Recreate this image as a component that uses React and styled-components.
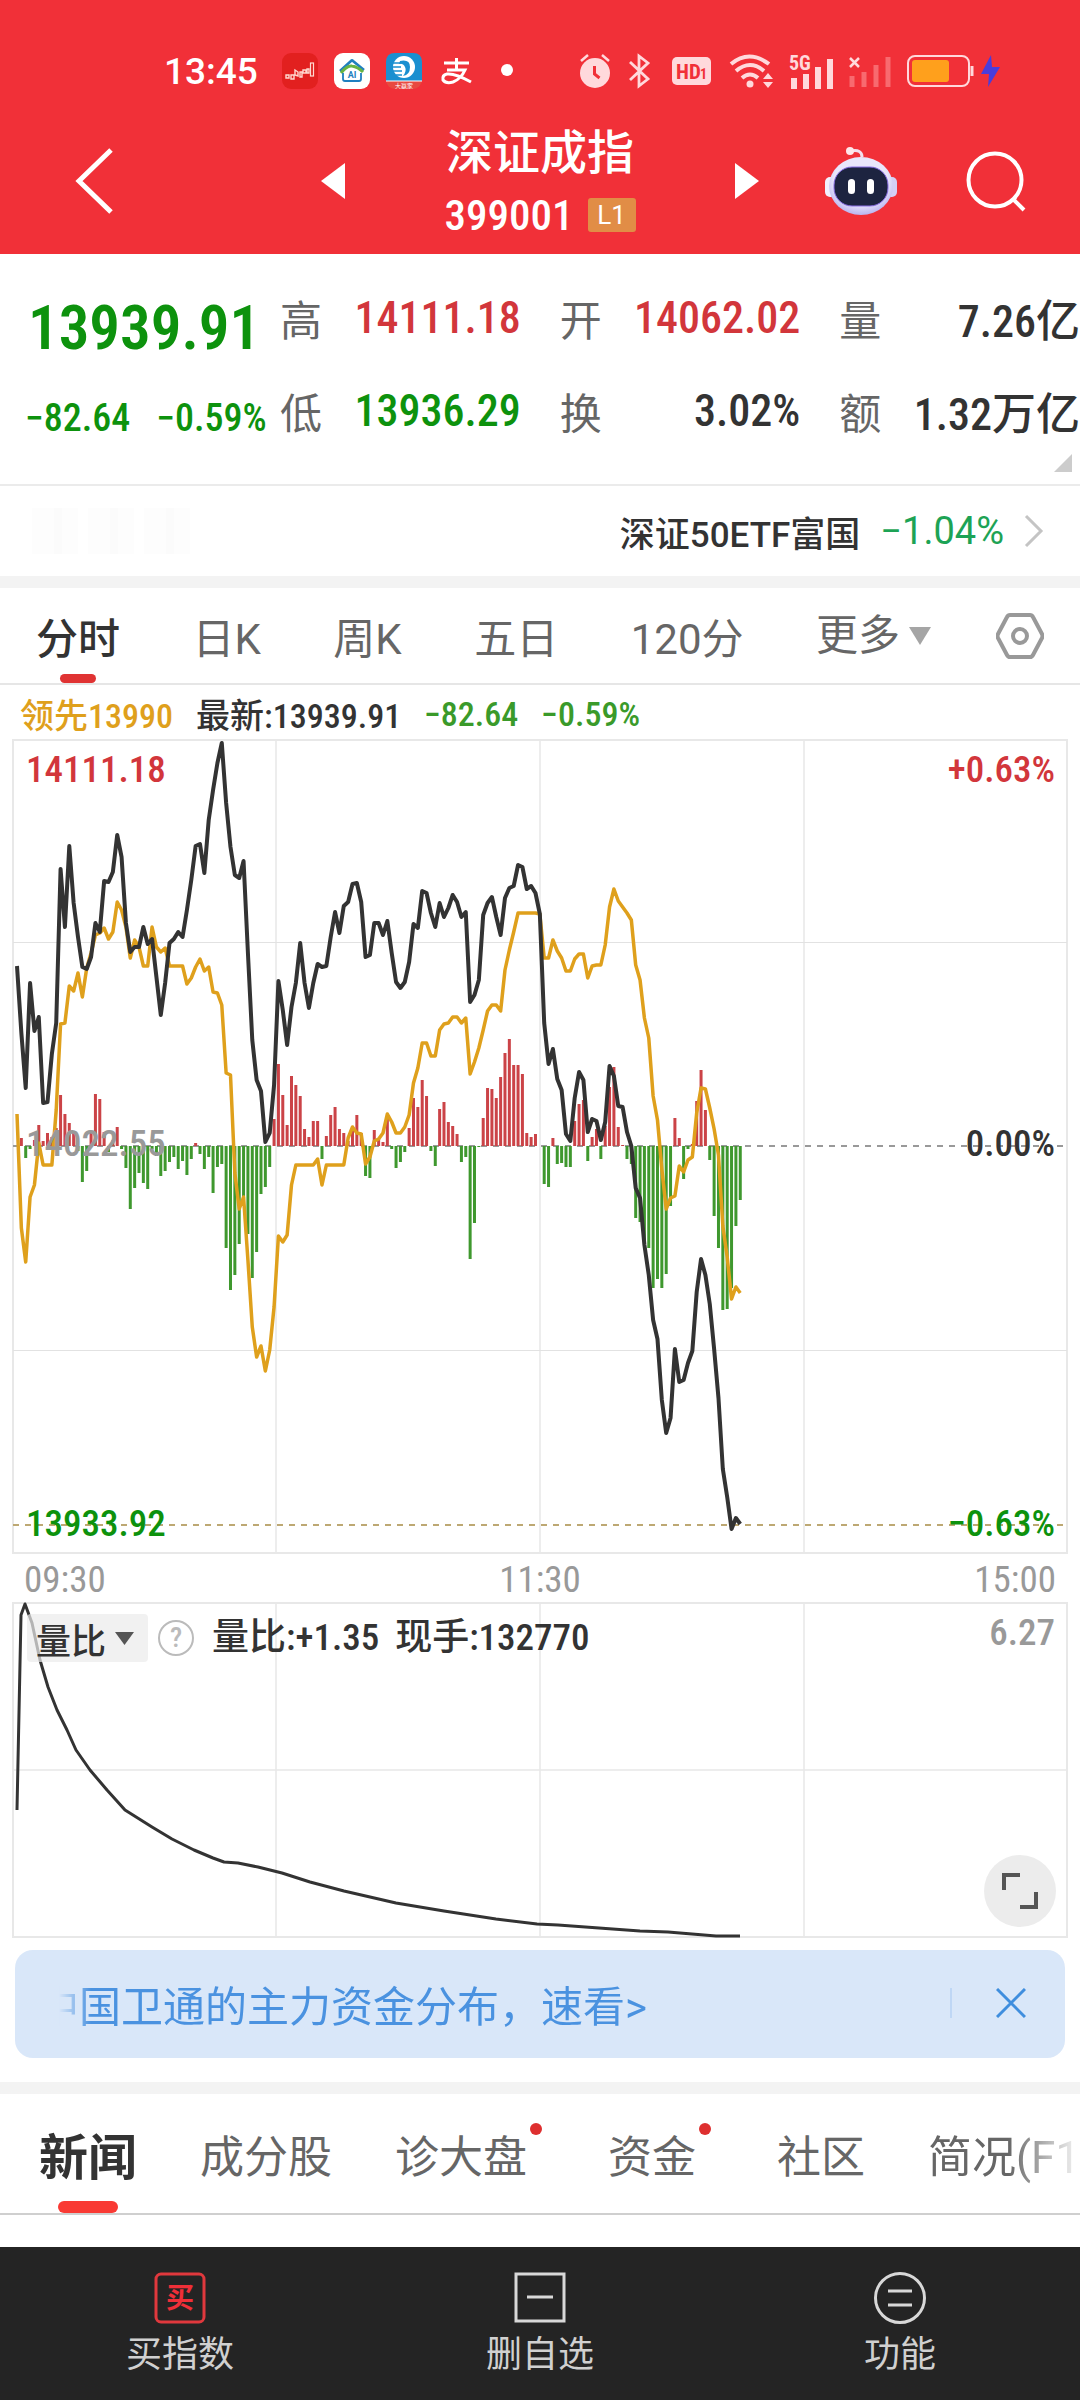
import { useState } from "react";
import styled, { createGlobalStyle } from "styled-components";

const GlobalStyle = createGlobalStyle`
  * {
    box-sizing: border-box;
  }
  body {
    margin: 0;
    background-color: white;
    color: #333;
    font-family: Roboto, "Noto Sans CJK SC", sans-serif;
  }
  button, select {
    margin: 0;
    padding: 0;
    border: none;
    background: none;
    color: inherit;
    font: inherit;
    cursor: pointer;
  }
  svg {
    display: block;
    flex-shrink: 0;
  }
`;

const RED = "#d2363b";
const GREEN = "#0d920d";
const numberFont = `"Roboto Condensed", "Liberation Sans Narrow", Roboto, "Noto Sans CJK SC", sans-serif`;

const Page = styled.div`
  width: 100%;
  min-height: 100vh;
  display: flex;
  flex-direction: column;
  overflow: hidden;
`;

const Header = styled.header`
  background-color: #f13038;
  color: white;
`;

const StatusBar = styled.div`
  display: flex;
  justify-content: space-between;
  align-items: center;
  height: 112px;
  padding: 30px 79px 0 164px;
`;

const StatusGroup = styled.div`
  display: flex;
  align-items: center;
  gap: 16px;
`;

const Clock = styled.span`
  font-size: 37px;
  font-weight: 500;
  margin-right: 8px;
`;

const TitleBar = styled.div`
  display: grid;
  grid-template-columns: 1fr 438px 1fr;
  align-items: center;
  height: 142px;
  padding: 0 54px 4px;
`;

const TitleNav = styled.div`
  display: flex;
  justify-content: space-between;
  align-items: center;
`;

const HeaderActions = styled.div`
  display: flex;
  justify-content: flex-end;
  align-items: center;
  gap: 68px;
`;

const IconButton = styled.button`
  display: flex;
  align-items: center;
`;

const BackButton = styled(IconButton)`
  padding-left: 21px;
`;

const TitleBlock = styled.div`
  display: flex;
  flex-direction: column;
  align-items: center;
  gap: 8px;
  h1 {
    margin: 0;
    font-size: 47px;
    line-height: 60px;
    font-weight: 500;
  }
`;

const CodeLine = styled.div`
  display: flex;
  align-items: center;
  gap: 14px;
  font-family: ${numberFont};
  font-size: 43px;
  line-height: 48px;
  font-weight: 500;
`;

const LevelBadge = styled.span`
  width: 48px;
  height: 34px;
  border-radius: 3px;
  background-color: #e18d46;
  font-family: Roboto, sans-serif;
  font-size: 26px;
  line-height: 34px;
  font-weight: 400;
  text-align: center;
`;

const Quote = styled.section`
  position: relative;
  display: flex;
  height: 232px;
  padding-top: 17px;
  border-bottom: 2px solid #ebebeb;
`;

const Price = styled.div`
  width: 280px;
  flex-shrink: 0;
  color: ${GREEN};
  font-family: ${numberFont};
`;

const LastPrice = styled.div`
  padding-left: 28px;
  font-size: 61px;
  font-weight: 600;
  line-height: 114px;
`;

const Change = styled.div`
  display: flex;
  gap: 26px;
  padding-left: 25px;
  font-size: 38px;
  font-weight: 500;
  line-height: 66px;
  white-space: nowrap;
`;

const QuoteGrid = styled.dl`
  flex: 1;
  display: grid;
  grid-template-columns: repeat(3, 1fr);
  grid-auto-rows: 93px;
  column-gap: 39px;
  margin: 0;
`;

const QuoteItem = styled.div`
  display: flex;
  justify-content: space-between;
  align-items: center;
  dt {
    color: #666;
    font-size: 42px;
  }
  dd {
    margin: 0;
    color: ${(props) => props.$color || "#333"};
    font-family: ${numberFont};
    font-size: 44px;
    font-weight: 500;
    white-space: nowrap;
  }
`;

const Corner = styled.svg`
  position: absolute;
  right: 8px;
  bottom: 12px;
`;

const EtfLink = styled.a`
  display: flex;
  align-items: center;
  height: 90px;
  padding: 0 36px 0 32px;
  color: #333;
  text-decoration: none;
  font-size: 35px;
  font-weight: 500;
`;

const Ghost = styled.span`
  width: 168px;
  height: 46px;
  margin-right: auto;
  background: repeating-linear-gradient(
    90deg,
    #fdfdfd 0 22px,
    #fbfbfb 22px 30px,
    #fdfdfd 30px 46px,
    #fff 46px 56px
  );
`;

const EtfChange = styled.span`
  margin: 0 20px;
  color: #1da355;
  font-size: 38px;
  font-weight: 400;
`;

const Band = styled.div`
  height: 12px;
  background-color: #f3f3f3;
`;

const PeriodBar = styled.div`
  display: flex;
  gap: 65px;
  height: 97px;
  padding: 0 36px;
  border-bottom: 2px solid #e6e6e6;
`;

const PeriodTabs = styled.nav`
  flex: 1;
  display: flex;
  justify-content: space-between;
`;

const PeriodTab = styled.button`
  position: relative;
  color: ${(props) => (props.$active ? "#333" : "#666")};
  font-size: 42px;
  font-weight: ${(props) => (props.$active ? 500 : 400)};
  &::after {
    content: "";
    display: ${(props) => (props.$active ? "block" : "none")};
    position: absolute;
    left: 50%;
    bottom: 0;
    width: 36px;
    height: 9px;
    margin-left: -18px;
    border-radius: 5px;
    background-color: #e03333;
  }
`;

const SelectWrap = styled.label`
  display: flex;
  align-items: center;
  gap: 8px;
  color: #666;
  font-size: 42px;
  select {
    appearance: none;
    outline: none;
  }
`;

const Legend = styled.div`
  display: flex;
  align-items: center;
  gap: 23px;
  height: 55px;
  padding: 2px 20px 0;
  font-family: ${numberFont};
  font-size: 34px;
  font-weight: 500;
  white-space: nowrap;
`;

const Tone = styled.span`
  color: ${(props) => props.$color};
`;

const Plot = styled.div`
  position: relative;
  margin: 0 13px;
  height: ${(props) => props.$height}px;
  > svg {
    width: 100%;
    height: 100%;
    overflow: visible;
  }
`;

const PlotLabels = styled.div`
  position: absolute;
  left: 13px;
  right: 12px;
  top: ${(props) => props.$top};
  display: flex;
  justify-content: space-between;
  color: ${(props) => props.$color};
  font-family: ${numberFont};
  font-size: 37px;
  line-height: 40px;
  font-weight: 500;
`;

const TimeAxis = styled.div`
  display: flex;
  justify-content: space-between;
  align-items: center;
  height: 50px;
  padding: 2px 24px 0;
  color: #999;
  font-family: ${numberFont};
  font-size: 37px;
`;

const RatioBar = styled.div`
  position: absolute;
  top: 11px;
  left: 14px;
  right: 12px;
  display: flex;
  align-items: center;
  height: 48px;
  font-family: ${numberFont};
  font-size: 37px;
  font-weight: 500;
  white-space: nowrap;
`;

const RatioSelect = styled.label`
  display: flex;
  align-items: center;
  gap: 8px;
  height: 48px;
  padding: 0 14px 0 9px;
  border-radius: 4px;
  background-color: rgba(235, 235, 235, 0.7);
  font-family: "Noto Sans CJK SC", sans-serif;
  font-size: 35px;
  select {
    appearance: none;
    outline: none;
  }
`;

const HelpButton = styled.button`
  width: 36px;
  height: 36px;
  margin: 0 18px 0 10px;
  border: 2px solid #bbb;
  border-radius: 50%;
  color: #bbb;
  font-size: 28px;
  line-height: 32px;
`;

const RatioValue = styled.span`
  margin-right: 16px;
  line-height: 48px;
`;

const RatioMax = styled.span`
  margin-left: auto;
  padding-bottom: 12px;
  color: #999;
`;

const ExpandButton = styled.button`
  position: absolute;
  right: 11px;
  bottom: 10px;
  width: 72px;
  height: 72px;
  display: flex;
  align-items: center;
  justify-content: center;
  border-radius: 50%;
  background-color: #ececec;
`;

const Banner = styled.aside`
  display: flex;
  align-items: center;
  height: 108px;
  margin: 13px 15px 24px;
  padding: 0 39px 2px 44px;
  border-radius: 18px;
  background-color: #d9e7f9;
  color: #4a92e0;
`;

const BannerText = styled.a`
  flex: 1;
  overflow: hidden;
  color: inherit;
  font-size: 42px;
  text-decoration: none;
  text-indent: -22px;
  white-space: nowrap;
  mask-image: linear-gradient(90deg, transparent, black 32px);
`;

const Divider = styled.span`
  width: 2px;
  height: 30px;
  margin-right: 44px;
  background-color: #bfd7f5;
`;

const InfoTabs = styled.nav`
  display: flex;
  gap: 63px;
  height: 121px;
  padding-left: 39px;
  border-bottom: 2px solid #cfcfcf;
  white-space: nowrap;
  overflow: hidden;
`;

const InfoTab = styled.button`
  position: relative;
  display: flex;
  align-items: center;
  flex-shrink: 0;
  color: ${(props) => (props.$active ? "#333" : "#666")};
  font-size: ${(props) => (props.$active ? 49 : 44)}px;
  font-weight: ${(props) => (props.$active ? 600 : 400)};
  mask-image: ${(props) =>
    props.$fade ? "linear-gradient(90deg, black 80px, transparent 155px)" : "none"};
  &::after {
    content: "";
    display: ${(props) => (props.$active ? "block" : "none")};
    position: absolute;
    left: 50%;
    bottom: 0;
    width: 60px;
    height: 12px;
    margin-left: -30px;
    border-radius: 6px;
    background-color: #f93a34;
  }
`;

const Dot = styled.span`
  align-self: flex-start;
  width: 12px;
  height: 12px;
  margin: 29px 3px 0;
  border-radius: 50%;
  background-color: #de2f2f;
`;

const BottomBar = styled.footer`
  display: flex;
  height: 153px;
  margin-top: auto;
  background-color: #242424;
  color: #d0d0d0;
`;

const BottomButton = styled.button`
  flex: 1;
  display: flex;
  flex-direction: column;
  align-items: center;
  gap: 6px;
  padding-top: 24px;
  font-size: 36px;
  line-height: 48px;
`;

// one value per minute, measured from the top of the plot
const price = [
  226, 293, 348, 243, 291, 277, 363, 362, 314, 283, 129, 187, 106, 163, 197,
  227, 229, 217, 183, 192, 141, 142, 132, 95, 117, 183, 212, 207, 207, 187,
  204, 199, 237, 275, 243, 203, 199, 192, 197, 170, 140, 106, 104, 133, 80,
  50, 23, 3, 63, 107, 135, 138, 121, 213, 300, 340, 351, 402, 393, 345, 241,
  270, 305, 267, 243, 203, 243, 268, 243, 224, 227, 226, 197, 172, 193, 166,
  162, 144, 143, 162, 217, 215, 183, 183, 195, 181, 213, 242, 248, 242, 222,
  184, 188, 151, 153, 173, 187, 163, 177, 168, 155, 162, 177, 172, 262, 255,
  240, 175, 163, 157, 177, 195, 158, 148, 146, 125, 127, 149, 146, 153, 174,
  283, 324, 309, 339, 350, 394, 401, 358, 332, 340, 392, 379, 381, 400, 382,
  326, 336, 366, 367, 392, 406, 448, 458, 505, 535, 580, 599, 660, 693, 678,
  609, 642, 640, 623, 611, 552, 519, 535, 564, 609, 658, 729, 757, 789, 778,
  784,
];

const lead = [
  374, 488, 522, 457, 445, 403, 425, 425, 425, 370, 284, 283, 246, 251, 233,
  257, 228, 213, 195, 193, 188, 199, 192, 162, 170, 187, 218, 200, 207, 226,
  226, 187, 207, 212, 208, 226, 226, 226, 226, 244, 238, 227, 219, 231, 227,
  252, 253, 265, 333, 335, 433, 469, 457, 520, 587, 617, 606, 631, 610, 567,
  496, 502, 495, 445, 425, 425, 425, 425, 425, 419, 445, 425, 425, 425, 425,
  425, 398, 387, 393, 394, 424, 417, 401, 399, 393, 374, 382, 393, 393, 387,
  375, 343, 328, 303, 303, 316, 316, 290, 284, 283, 277, 277, 283, 278, 334,
  322, 308, 290, 271, 265, 265, 271, 230, 210, 192, 173, 173, 173, 173, 173,
  174, 218, 218, 200, 211, 218, 231, 231, 219, 214, 214, 238, 226, 225, 225,
  205, 167, 149, 161, 167, 173, 180, 225, 240, 278, 298, 356, 380, 429, 469,
  458, 456, 426, 432, 420, 417, 373, 348, 349, 368, 389, 415, 486, 517, 559,
  547, 553,
];

const bars = [
  0, 8, -12, -3, 6, 21, 5, 13, 9, 18, 51, 32, 23, 14, -5, -36, -25, 14, 52,
  47, 14, -6, 6, 19, -3, -22, -63, -42, -27, -37, -43, -3, -10, -30, -25, -16,
  -11, -23, -15, -29, -13, 3, -8, -23, -11, -47, -21, -18, -102, -144, -129,
  -98, -50, -88, -132, -106, -48, -41, -21, 27, 82, 51, 21, 70, 61, 50, 17, 9,
  25, 25, -13, 10, 31, 39, 17, 13, 5, 16, 31, 13, -30, -32, 16, 8, 4, 28, -3,
  -22, -16, -6, 18, 48, 39, 66, 50, -5, -20, 37, 44, 24, 20, 12, -16, -11,
  -113, -77, -1, 28, 58, 57, 48, 69, 93, 107, 81, 81, 72, 13, 9, 12, 0, -38,
  -41, 8, -18, -17, -21, -21, 25, 42, 46, -15, 9, 17, -13, 20, 59, 79, 19, 1,
  -13, -18, -72, -76, -95, -102, -142, -133, -142, -128, -60, 28, 8, -33, -3,
  2, 45, 76, 36, -14, -70, -102, -164, -163, -142, -80, -54,
];

const ratio =
  "4,207 8,12 12,1 19,20 27,57 35,84 44,107 54,127 63,147 77,167 94,187 112,207 139,224 159,236 181,247 200,255 211,259 225,260 245,264 269,270 297,279 331,288 383,300 431,308 483,316 524,321 545,322 586,325 627,328 655,329 703,333 727,333";

const ZERO = 406;
const xOf = (i) => 4 + i * 4.357;
const toPoints = (values) => values.map((y, i) => `${xOf(i)},${y}`).join(" ");

const quotes = [
  ["高", "14111.18", RED],
  ["开", "14062.02", RED],
  ["量", "7.26亿"],
  ["低", "13936.29", GREEN],
  ["换", "3.02%"],
  ["额", "1.32万亿"],
];

const periods = ["分时", "日K", "周K", "五日", "120分"];

const infoTabs = [
  { name: "新闻" },
  { name: "成分股" },
  { name: "诊大盘", dot: true },
  { name: "资金", dot: true },
  { name: "社区" },
  { name: "简况(F10)", fade: true },
];

const Triangle = ({ width, height, color, dir }) => {
  const points = {
    left: `${width},0 ${width},${height} 0,${height / 2}`,
    right: `0,0 0,${height} ${width},${height / 2}`,
    down: `0,0 ${width},0 ${width / 2},${height}`,
  };
  return (
    <svg width={width} height={height} aria-hidden="true">
      <polygon points={points[dir]} fill={color} />
    </svg>
  );
};

const StatusIcons = () => (
  <>
    <StatusGroup>
      <Clock>13:45</Clock>
      <svg width="36" height="36" viewBox="0 0 36 36">
        <rect width="36" height="36" rx="9" fill="#e2201f" />
        <path d="M4 25v-3h3v3zM9 26v-4h3v4zM13 22v-5l3 2v4zM18 24v-5h2v5zM21 20v-3h3v3zM25 20v-4h2v4z" fill="none" stroke="#ffd9d0" strokeWidth="1.4" />
        <rect x="28.500" y="10" width="3" height="13" fill="none" stroke="#ffd9d0" strokeWidth="1.2" />
      </svg>
      <svg width="36" height="36" viewBox="0 0 36 36">
        <rect width="36" height="36" rx="9" fill="white" />
        <path d="M6 18 17 8q1-1 2 0l11 9" fill="none" stroke="#1f7fc0" strokeWidth="2.600" />
        <path d="M7 20q6-8 11-7 6 1 11 6" fill="none" stroke="#67b445" strokeWidth="3" />
        <path d="M9 20v6q0 2 2 2h14q2 0 2-2v-6" fill="none" stroke="#1f7fc0" strokeWidth="1.800" />
        <text x="18" y="25" fontSize="9" fontWeight="700" textAnchor="middle" fill="#1f7fc0">AI</text>
      </svg>
      <svg width="36" height="36" viewBox="0 0 36 36">
        <rect width="36" height="36" rx="9" fill="#e8493f" />
        <path d="M0 28V9q0-9 9-9h18q9 0 9 9v19z" fill="#1a8fd0" />
        <circle cx="18" cy="14" r="11" fill="white" />
        <path d="M14 8q10-2 10 6t-7 9q4-5 2-9t-6-3z" fill="#1a8fd0" />
        <path d="M7 10h8M6 14h9M7 18h9M10 22h6" stroke="#1a8fd0" strokeWidth="1.300" />
        <path d="M0 28h36" stroke="white" />
        <text x="18" y="34.500" fontSize="6" textAnchor="middle" fill="white">大赢家</text>
      </svg>
      <svg width="36" height="36" viewBox="0 0 36 36">
        <path d="M6 10h25M18.500 5v12M9 17h18q-4 9-12 12-7 2-10-2-1-5 4-6 8-1 24 8" fill="none" stroke="white" strokeWidth="3" />
      </svg>
      <svg width="36" height="36" viewBox="0 0 36 36">
        <circle cx="17" cy="17" r="6" fill="white" />
      </svg>
    </StatusGroup>
    <StatusGroup>
      <svg width="32" height="36" viewBox="0 0 32 36">
        <circle cx="16" cy="20" r="15" fill="#ffd9dc" />
        <path d="m2 8 7-6M30 8l-7-6" stroke="#ffd9dc" strokeWidth="2.500" />
        <path d="M15.500 13v8l5 4" fill="none" stroke="#f13038" strokeWidth="3" />
      </svg>
      <svg width="26" height="36" viewBox="0 0 26 36">
        <path d="m3 9 18 17-9 7V3l9 7L3 27" fill="none" stroke="#ffd9dc" strokeWidth="2.800" />
      </svg>
      <svg width="44" height="30" viewBox="0 0 44 30">
        <rect x="3" y="1" width="39" height="28" rx="5" fill="#ffd9dc" />
        <text x="7" y="23" fontSize="21" fontWeight="700" fill="#f13038" fontFamily={numberFont}>HD</text>
        <text x="31" y="23" fontSize="14" fontWeight="700" fill="#f13038" fontFamily={numberFont}>1</text>
      </svg>
      <svg width="44" height="36" viewBox="0 0 44 36">
        <path d="M2 11q18-15 38 0M7 18q14-12 28 0M13 25q8-7 16 0" fill="none" stroke="#ffd9dc" strokeWidth="4" />
        <circle cx="21" cy="31" r="3.500" fill="#ffd9dc" />
        <path d="m34 26 5-6 5 6zM34 29l5 6 5-6z" fill="#ffd9dc" />
      </svg>
      <svg width="44" height="44" viewBox="0 -6 44 44">
        <text x="0" y="15" fontSize="20" fontWeight="700" fill="#ffd9dc" fontFamily={numberFont}>5G</text>
        <path d="M5 34V23M17 34V19M29 34V12M41 34V4" stroke="#ffd9dc" strokeWidth="6" />
      </svg>
      <svg width="42" height="36" viewBox="0 0 42 36">
        <path d="m1 5 9 9M10 5l-9 9" stroke="#ffd9dc" strokeWidth="2.500" />
        <path d="M3 34V23M15 34V19M27 34V12M39 34V4" stroke="#f86a6f" strokeWidth="5" />
      </svg>
      <svg width="94" height="36" viewBox="0 0 94 36">
        <rect x="1" y="3" width="61" height="30" rx="7" fill="none" stroke="#ffd9dc" strokeWidth="2" />
        <path d="M65 13v10" stroke="#ffd9dc" strokeWidth="3" />
        <rect x="5" y="7" width="37" height="22" rx="3" fill="#ffa01c" />
        <path d="M84 2 74 21h8l-1 13 12-20h-8z" fill="#4a3ddb" />
      </svg>
    </StatusGroup>
  </>
);

const Robot = () => (
  <svg width="74" height="74" viewBox="0 0 74 74">
    <defs>
      <radialGradient id="shell" cx="50%" cy="40%" r="60%">
        <stop offset="0.700" stopColor="#e9e6fb" />
        <stop offset="1" stopColor="#b9b4f0" />
      </radialGradient>
    </defs>
    <path d="M27 7q11-2 11 6" fill="none" stroke="#f3dfee" strokeWidth="3" />
    <circle cx="26" cy="7" r="4" fill="#ffe6ea" />
    <rect x="1" y="33" width="11" height="20" rx="5" fill="#f2effc" />
    <rect x="62" y="33" width="11" height="20" rx="5" fill="#d4cff6" />
    <ellipse cx="37" cy="42" rx="32" ry="29" fill="url(#shell)" />
    <rect x="10" y="23" width="54" height="39" rx="18" fill="#1d2440" stroke="#8a6fe6" />
    <rect x="24" y="35" width="7" height="15" rx="3.500" fill="white" />
    <rect x="43" y="35" width="7" height="15" rx="3.500" fill="white" />
  </svg>
);

const PriceChart = () => (
  <svg viewBox="0 0 1054 813" preserveAspectRatio="none" role="img" aria-label="分时走势">
    <g stroke="#e8e8e8" strokeWidth="2" fill="none">
      <rect x="0" y="0" width="1054" height="813" />
      <path d="M263 0V813M527 0V813M791 0V813" strokeWidth="1.500" />
      <path d="M0 202.500H1054M0 610.500H1054" stroke="#e2e2e2" strokeWidth="1" />
    </g>
    <path d={`M0 ${ZERO}H1054`} stroke="#999" strokeWidth="2" strokeDasharray="6 6" />
    <path d="M0 785H1054" stroke="#bda873" strokeWidth="2" strokeDasharray="6 6" />
    {bars.map((value, i) => (
      <rect
        key={i}
        x={xOf(i) - 1.5}
        y={value > 0 ? ZERO - value : ZERO}
        width="3"
        height={Math.abs(value)}
        fill={value > 0 ? "#cb4347" : "#3f982e"}
      />
    ))}
    <polyline points={toPoints(lead)} fill="none" stroke="#dfa01c" strokeWidth="3.500" strokeLinejoin="round" />
    <polyline points={toPoints(price)} fill="none" stroke="#333" strokeWidth="4" strokeLinejoin="round" />
  </svg>
);

const RatioChart = () => (
  <svg viewBox="0 0 1054 334" preserveAspectRatio="none" role="img" aria-label="量比">
    <g stroke="#e8e8e8" strokeWidth="2" fill="none">
      <rect x="0" y="0" width="1054" height="334" />
      <path d="M263 0V334M527 0V334M791 0V334M0 167H1054" strokeWidth="1.500" />
    </g>
    <polyline points={ratio} fill="none" stroke="#333" strokeWidth="3" strokeLinejoin="round" />
  </svg>
);

const App = () => {
  const [period, setPeriod] = useState("分时");
  const [tab, setTab] = useState("新闻");

  return (
    <Page>
      <GlobalStyle />
      <Header>
        <StatusBar>
          <StatusIcons />
        </StatusBar>
        <TitleBar>
          <BackButton aria-label="返回">
            <svg width="40" height="68" viewBox="0 0 40 68">
              <path d="M36 3 4 34l32 31" fill="none" stroke="white" strokeWidth="5" />
            </svg>
          </BackButton>
          <TitleNav>
            <IconButton aria-label="上一个">
              <Triangle width={24} height={36} color="white" dir="left" />
            </IconButton>
            <TitleBlock>
              <h1>深证成指</h1>
              <CodeLine>
                399001 <LevelBadge>L1</LevelBadge>
              </CodeLine>
            </TitleBlock>
            <IconButton aria-label="下一个">
              <Triangle width={24} height={36} color="white" dir="right" />
            </IconButton>
          </TitleNav>
          <HeaderActions>
            <IconButton aria-label="助手">
              <Robot />
            </IconButton>
            <IconButton aria-label="搜索">
              <svg width="60" height="62" viewBox="0 0 60 62">
                <circle cx="29" cy="30" r="26.500" fill="none" stroke="white" strokeWidth="4" />
                <path d="m47 49 11 11" stroke="white" strokeWidth="4" />
              </svg>
            </IconButton>
          </HeaderActions>
        </TitleBar>
      </Header>

      <Quote>
        <Price>
          <LastPrice>13939.91</LastPrice>
          <Change>
            <span>−82.64</span>
            <span>−0.59%</span>
          </Change>
        </Price>
        <QuoteGrid>
          {quotes.map(([label, value, color]) => (
            <QuoteItem key={label} $color={color}>
              <dt>{label}</dt>
              <dd>{value}</dd>
            </QuoteItem>
          ))}
        </QuoteGrid>
        <Corner width="18" height="18">
          <polygon points="18,0 18,18 0,18" fill="#ccc" />
        </Corner>
      </Quote>

      <EtfLink href="#etf">
        <Ghost />
        <span>深证50ETF富国</span>
        <EtfChange>−1.04%</EtfChange>
        <svg width="20" height="34" viewBox="0 0 20 34">
          <path d="m2 2 15 15L2 32" fill="none" stroke="#c4c4c4" strokeWidth="3" />
        </svg>
      </EtfLink>
      <Band />

      <PeriodBar>
        <PeriodTabs>
          {periods.map((name) => (
            <PeriodTab key={name} $active={name === period} onClick={() => setPeriod(name)}>
              {name}
            </PeriodTab>
          ))}
          <SelectWrap>
            <select aria-label="更多周期">
              <option>更多</option>
            </select>
            <Triangle width={22} height={18} color="#a5a5a5" dir="down" />
          </SelectWrap>
        </PeriodTabs>
        <IconButton aria-label="设置">
          <svg width="48" height="46" viewBox="0 0 48 46">
            <path d="M14 2h20q2 0 3 2l9 17q1 2 0 4l-9 17q-1 2-3 2H14q-2 0-3-2L2 25q-1-2 0-4l9-17q1-2 3-2z" fill="none" stroke="#999" strokeWidth="4" />
            <circle cx="24" cy="23" r="7" fill="none" stroke="#999" strokeWidth="4" />
          </svg>
        </IconButton>
      </PeriodBar>

      <Legend>
        <Tone $color="#dfa01c">领先13990</Tone>
        <span>最新:13939.91</span>
        <Tone $color="#3a9a2a">−82.64</Tone>
        <Tone $color="#3a9a2a">−0.59%</Tone>
      </Legend>

      <Plot $height={813}>
        <PriceChart />
        <PlotLabels $top="10px" $color={RED}>
          <span>14111.18</span>
          <span>+0.63%</span>
        </PlotLabels>
        <PlotLabels $top="384px" $color="#999">
          <span>14022.55</span>
          <Tone $color="#333">0.00%</Tone>
        </PlotLabels>
        <PlotLabels $top="764px" $color={GREEN}>
          <span>13933.92</span>
          <span>−0.63%</span>
        </PlotLabels>
      </Plot>
      <TimeAxis>
        <span>09:30</span>
        <span>11:30</span>
        <span>15:00</span>
      </TimeAxis>

      <Plot $height={334}>
        <RatioChart />
        <RatioBar>
          <RatioSelect>
            <select aria-label="指标">
              <option>量比</option>
            </select>
            <Triangle width={19} height={13} color="#555" dir="down" />
          </RatioSelect>
          <HelpButton aria-label="说明">?</HelpButton>
          <RatioValue>量比:+1.35</RatioValue>
          <RatioValue>现手:132770</RatioValue>
          <RatioMax>6.27</RatioMax>
        </RatioBar>
        <ExpandButton aria-label="全屏">
          <svg width="36" height="38" viewBox="0 0 36 38">
            <path d="M2 18V3h16M34 20v15H18" fill="none" stroke="#555" strokeWidth="4" />
          </svg>
        </ExpandButton>
      </Plot>

      <Banner>
        <BannerText href="#funds">中国卫通的主力资金分布，速看&gt;</BannerText>
        <Divider />
        <IconButton aria-label="关闭">
          <svg width="30" height="30" viewBox="0 0 30 30">
            <path d="m1 1 28 28M29 1 1 29" stroke="#3f8ede" strokeWidth="3" />
          </svg>
        </IconButton>
      </Banner>
      <Band />

      <InfoTabs>
        {infoTabs.map(({ name, dot, fade }) => (
          <InfoTab key={name} $active={name === tab} $fade={fade} onClick={() => setTab(name)}>
            {name}
            {dot && <Dot />}
          </InfoTab>
        ))}
      </InfoTabs>

      <BottomBar>
        <BottomButton>
          <svg width="52" height="54" viewBox="0 0 52 54">
            <rect x="2" y="3" width="48" height="48" rx="5" fill="none" stroke="#e0383d" strokeWidth="3" />
            <text x="26" y="37" fontSize="28" fontWeight="700" textAnchor="middle" fill="#f02f38">买</text>
          </svg>
          买指数
        </BottomButton>
        <BottomButton>
          <svg width="52" height="54" viewBox="0 0 52 54">
            <rect x="2" y="3" width="48" height="47" fill="none" stroke="#d8d8d8" strokeWidth="3" />
            <path d="M13 26h26" stroke="#d8d8d8" strokeWidth="3" />
          </svg>
          删自选
        </BottomButton>
        <BottomButton>
          <svg width="52" height="54" viewBox="0 0 52 54">
            <circle cx="26" cy="27" r="24.500" fill="none" stroke="#d8d8d8" strokeWidth="3" />
            <path d="M14 20h24M14 34h24" stroke="#d8d8d8" strokeWidth="3" />
          </svg>
          功能
        </BottomButton>
      </BottomBar>
    </Page>
  );
};

export default App;
